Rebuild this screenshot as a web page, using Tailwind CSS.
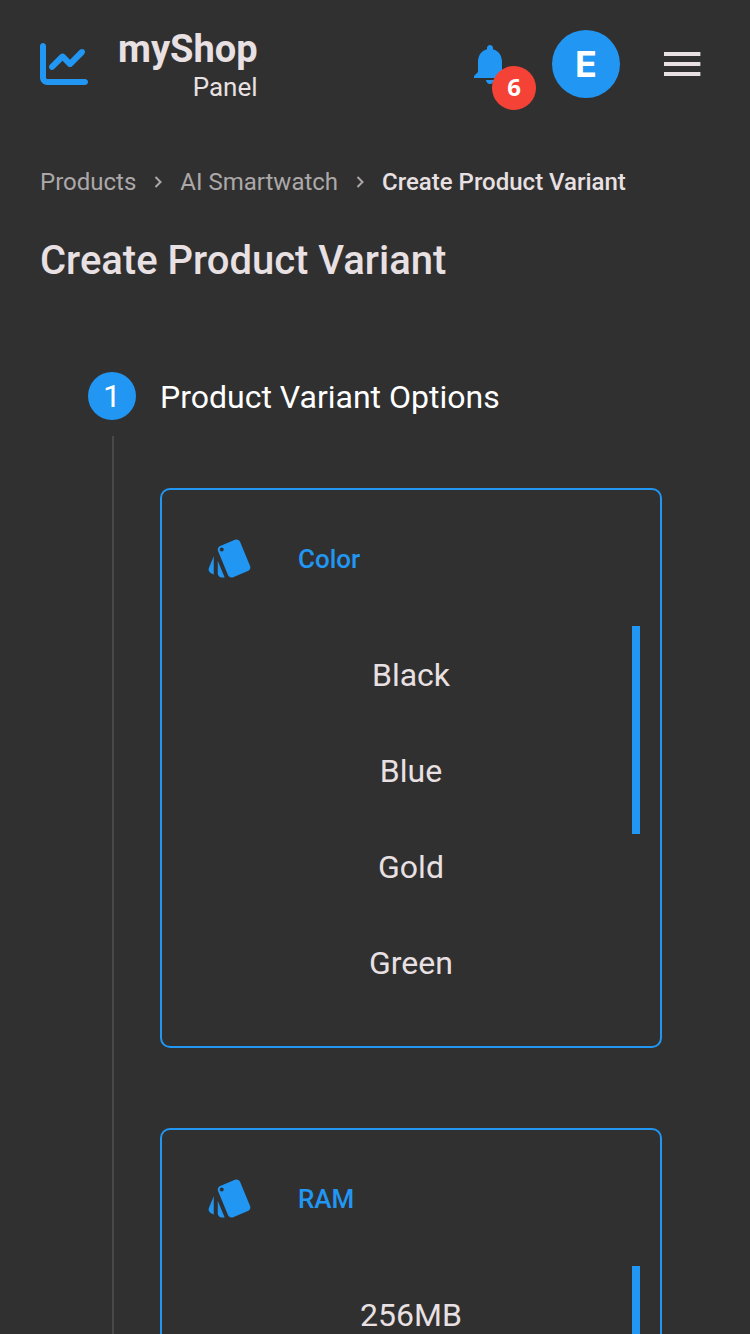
<!DOCTYPE html>
<html lang="en">
<head>
<meta charset="utf-8">
<title>Create Product Variant</title>
<script src="https://cdn.jsdelivr.net/npm/@tailwindcss/browser@4"></script>
</head>
<body class="h-[1334px] overflow-hidden bg-[#303030] font-['Roboto',sans-serif] text-[#e8e0e2]">
<header class="flex h-32 items-center pr-11 pl-10">
  <svg class="size-12 text-[#2196f3]" viewBox="0 0 512 512" fill="currentColor"><path d="M64 64c0-17.7-14.3-32-32-32S0 46.3 0 64V400c0 44.2 35.8 80 80 80H480c17.7 0 32-14.3 32-32s-14.3-32-32-32H80c-8.800 0-16-7.200-16-16V64zm406.600 86.600c12.500-12.500 12.500-32.800 0-45.300s-32.800-12.500-45.300 0L320 210.700l-57.400-57.400c-12.500-12.500-32.800-12.500-45.300 0l-112 112c-12.500 12.500-12.500 32.800 0 45.300s32.800 12.500 45.300 0L240 221.300l57.400 57.400c12.500 12.500 32.800 12.500 45.300 0l128-128z"/></svg>
  <div class="ml-[30px] flex flex-col items-end pt-1.5">
    <span class="text-[38px] leading-10 font-bold">myShop</span>
    <span class="text-[26px] leading-9">Panel</span>
  </div>
  <div class="relative ml-auto size-12 text-[#2196f3]">
    <svg class="size-12" viewBox="0 0 24 24" fill="currentColor"><path d="M12 22c1.100 0 2-.9 2-2h-4c0 1.100.89 2 2 2zm6-6v-5c0-3.070-1.640-5.640-4.500-6.320V4c0-.83-.67-1.500-1.500-1.500s-1.500.67-1.500 1.500v.68C7.630 5.360 6 7.920 6 11v5l-2 2v1h16v-1z"/></svg>
    <span class="absolute top-[26px] left-[26px] flex size-11 items-center justify-center rounded-full bg-[#f44336] pb-0.5 font-['Open_Sans',sans-serif] text-2xl font-bold text-white">6</span>
  </div>
  <div class="ml-[38px] flex size-[68px] items-center justify-center rounded-full bg-[#2196f3] font-['Inter',sans-serif] text-4xl font-bold text-white">E</div>
  <svg class="ml-[38px] size-12" viewBox="0 0 24 24" fill="currentColor"><path d="M3 18h18.200v-2H3v2zm0-5h18.200v-2H3v2zm0-7v2h18.200V6H3z"/></svg>
</header>
<nav class="mt-9 flex h-9 items-center pl-10 text-2xl text-[#aca8a9]">
  <span>Products</span>
  <svg class="mx-[18px] h-3 w-2" viewBox="0 0 8 12" fill="none" stroke="currentColor" stroke-width="2"><path d="M1.500 1l5 5-5 5"/></svg>
  <span>AI Smartwatch</span>
  <svg class="mx-[18px] h-3 w-2" viewBox="0 0 8 12" fill="none" stroke="currentColor" stroke-width="2"><path d="M1.500 1l5 5-5 5"/></svg>
  <span class="font-medium text-[#e8e0e2]">Create Product Variant</span>
</nav>
<h1 class="mt-[37px] pl-10 text-[40px] leading-12 font-medium">Create Product Variant</h1>
<main class="mt-[87px] pl-[88px]">
  <div class="flex h-12 items-center gap-6 text-[32px] text-white">
    <span class="flex size-12 items-center justify-center rounded-full bg-[#2196f3]">1</span>
    <h2 class="pt-0.5">Product Variant Options</h2>
  </div>
  <div class="mt-4 ml-6 flex h-[898px] flex-col gap-20 overflow-hidden border-l-2 border-[#494949] pt-[52px] pl-[46px]">
    <section class="flex h-[560px] w-[502px] shrink-0 flex-col rounded-[10px] border-2 border-[#2196f3]">
      <div class="flex h-[136px] items-center gap-11 pl-11 text-[#2196f3]">
        <svg class="size-12" viewBox="0 0 24 24" fill="currentColor"><path d="M2.530 19.650l1.340.56v-9.030l-2.430 5.860c-.41 1.020.08 2.190 1.090 2.610zm19.500-3.700L17.070 3.980c-.31-.75-1.040-1.210-1.810-1.230-.26 0-.53.04-.79.15L7.100 5.950c-.75.31-1.210 1.030-1.230 1.800-.01.27.04.54.15.8l4.960 11.970c.31.76 1.050 1.220 1.830 1.230.26 0 .52-.05.77-.15l7.360-3.050c1.020-.42 1.510-1.590 1.090-2.600zM7.880 8.750c-.55 0-1-.45-1-1s.45-1 1-1 1 .45 1 1-.45 1-1 1zm-2 11c0 1.100.9 2 2 2h1.450l-3.450-8.340v6.340z"/></svg>
        <h3 class="pt-0.5 text-[26px] font-medium">Color</h3>
      </div>
      <div class="flex pr-5">
        <ul class="flex-1 pt-px pl-7 text-center text-[32px] leading-[96px]">
          <li>Black</li><li>Blue</li><li>Gold</li><li>Green</li>
        </ul>
        <div class="h-[208px] w-2 bg-[#2196f3]"></div>
      </div>
    </section>
    <section class="flex h-[560px] w-[502px] shrink-0 flex-col rounded-[10px] border-2 border-[#2196f3]">
      <div class="flex h-[136px] items-center gap-11 pl-11 text-[#2196f3]">
        <svg class="size-12" viewBox="0 0 24 24" fill="currentColor"><path d="M2.530 19.650l1.340.56v-9.030l-2.430 5.860c-.41 1.020.08 2.190 1.090 2.610zm19.500-3.700L17.070 3.980c-.31-.75-1.040-1.210-1.810-1.230-.26 0-.53.04-.79.15L7.100 5.950c-.75.31-1.210 1.030-1.230 1.800-.01.27.04.54.15.8l4.960 11.970c.31.76 1.050 1.220 1.830 1.230.26 0 .52-.05.77-.15l7.360-3.050c1.020-.42 1.510-1.590 1.090-2.600zM7.880 8.750c-.55 0-1-.45-1-1s.45-1 1-1 1 .45 1 1-.45 1-1 1zm-2 11c0 1.100.9 2 2 2h1.450l-3.450-8.340v6.340z"/></svg>
        <h3 class="pt-0.5 text-[26px] font-medium">RAM</h3>
      </div>
      <div class="flex pr-5">
        <ul class="flex-1 pt-px pl-7 text-center text-[32px] leading-[96px]">
          <li>256MB</li>
        </ul>
        <div class="h-[208px] w-2 bg-[#2196f3]"></div>
      </div>
    </section>
  </div>
</main>
</body>
</html>
